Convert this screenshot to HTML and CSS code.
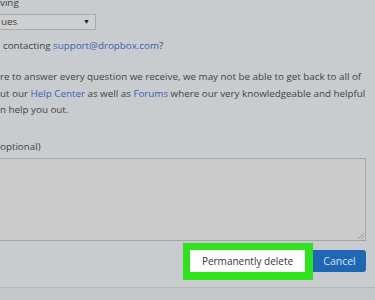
FILE: index.html
```html
<!DOCTYPE html>
<html lang="en">
<head>
    <meta charset="UTF-8">
    <meta name="viewport" content="width=device-width, initial-scale=1.0">
    <title>Delete account</title>
    <link rel="stylesheet" href="styles.css">
</head>
<body>

<div class="container">
    <label class="field-label" for="reason">ving</label>
    <div class="select-box" id="reason">
        <span>ues</span>
        <span class="arrow">&#9660;</span>
    </div>

    <p class="contact">contacting <a href="#">support@dropbox.com</a>?</p>

    <p class="notice">
        re to answer every question we receive, we may not be able to get back to all of<br>
        ut our <a href="#">Help Center</a> as well as <a href="#">Forums</a> where our very knowledgeable and helpful<br>
        n help you out.
    </p>

    <label class="field-label comment-label" for="comment">optional)</label>
    <div class="comment-box" id="comment">
        <span class="grip"></span>
    </div>

    <div class="actions">
        <div class="highlight">
            <button class="delete-btn">Permanently delete</button>
        </div>
        <button class="cancel-btn">Cancel</button>
    </div>
</div>

<div class="footer"></div>

</body>
</html>
```

FILE: styles.css
```css
* {
    box-sizing: border-box;
    margin: 0;
    padding: 0;
}

body {
    background-color: #c9ccce;
    font-family: "Open Sans", Arial, sans-serif;
    font-size: 9.8px;
    color: #404244;
    width: 375px;
    height: 300px;
    overflow: hidden;
}

a {
    color: #3a5cb6;
    text-decoration: none;
}

.container {
    width: 366px;
    height: 287px;
    display: flex;
    flex-direction: column;
}

.container > * {
    flex-shrink: 0;
}

.field-label {
    display: block;
    line-height: 16px;
    margin-top: -5px;
}

.select-box {
    width: 98px;
    height: 16px;
    margin-top: 3px;
    margin-left: -2px;
    padding: 0 5px 0 2px;
    border: 1px solid #a9abad;
    background: #cdcfd0;
    display: flex;
    justify-content: space-between;
    align-items: center;
    line-height: 14px;
}

.arrow {
    font-size: 7px;
    color: #222;
}

.contact {
    line-height: 16px;
    margin-top: 8px;
    padding-left: 3px;
    white-space: nowrap;
}

.notice {
    line-height: 16.5px;
    margin-top: 15px;
    white-space: nowrap;
}

.comment-label {
    margin-top: 20px;
}

.comment-box {
    height: 83px;
    margin-top: 3px;
    margin-left: -2px;
    border: 1px solid #a4a6a8;
    background: #cbcbcb;
    position: relative;
}

.grip {
    position: absolute;
    right: 1px;
    bottom: 1px;
    width: 6px;
    height: 6px;
    background: linear-gradient(135deg, transparent 45%, #999 45%, #999 55%, transparent 55%, transparent 70%, #999 70%, #999 80%, transparent 80%);
}

.actions {
    display: flex;
    justify-content: flex-end;
    align-items: flex-start;
    margin-top: 2px;
}

.highlight {
    border: 7px solid #30e21e;
    border-right-width: 8px;
    border-bottom-width: 8px;
}

.delete-btn,
.cancel-btn {
    height: 22px;
    border: none;
    font-family: "Open Sans", Arial, sans-serif;
    font-size: 10px;
    cursor: pointer;
}

.delete-btn {
    width: 115px;
    background: #ffffff;
    color: #333;
}

.cancel-btn {
    width: 53px;
    margin-top: 7px;
    background: #1f67b5;
    color: #d8e4f2;
    border-radius: 0 3px 3px 0;
    font-size: 10.5px;
}

.footer {
    border-top: 1px solid #b3b6b8;
    height: 13px;
    background: #c6c9cb;
}
```
